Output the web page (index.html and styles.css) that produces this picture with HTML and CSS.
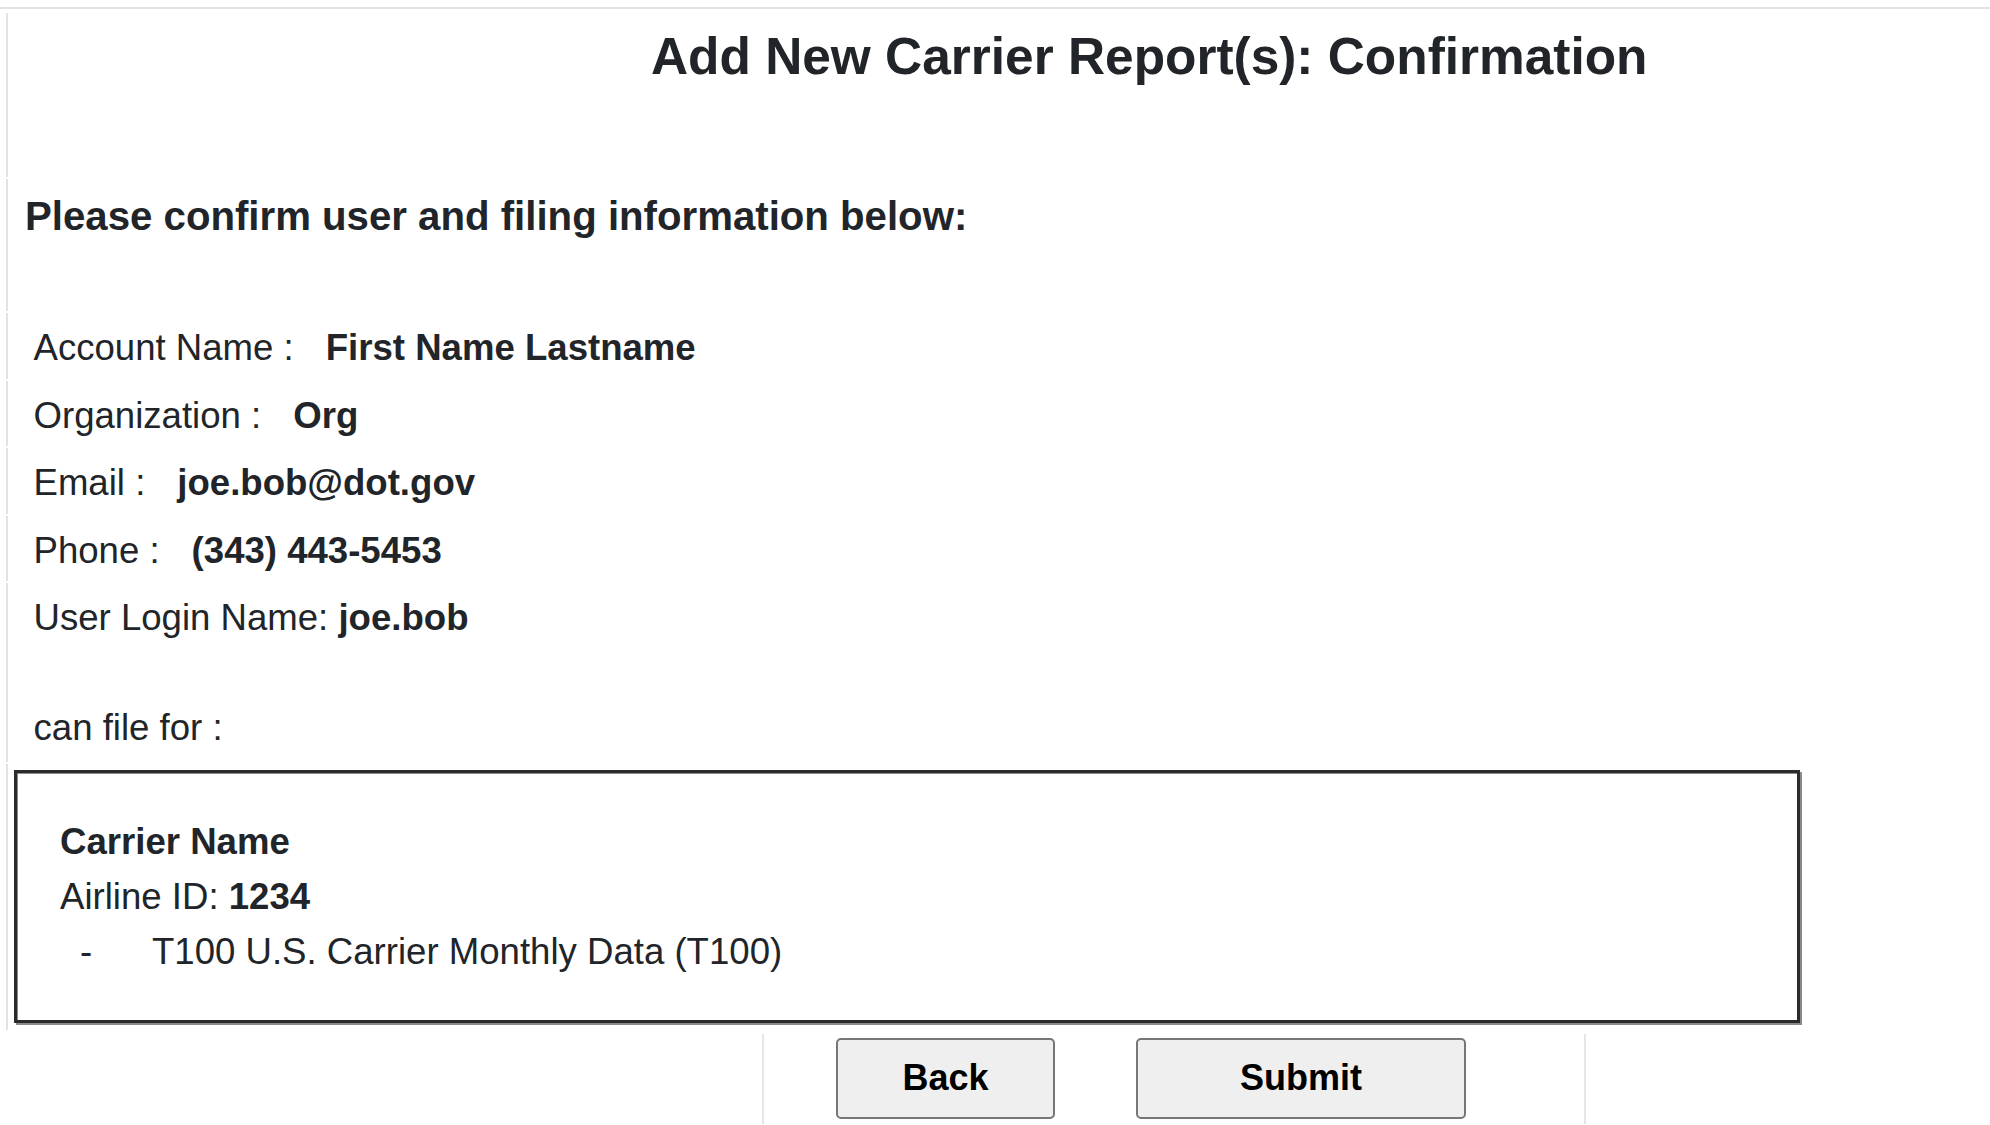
FILE: index.html
```html
<!DOCTYPE html>
<html lang="en">
<head>
    <meta charset="UTF-8">
    <meta name="viewport" content="width=device-width, initial-scale=1.0">
    <title>Add New Carrier Report(s): Confirmation</title>

    <link rel="stylesheet" href="styles.css">
</head>
<body>
    <div class="topo"></div>
    <div class="pagina">
        <div class="celula titulo">
            <h1>Add New Carrier Report(s): Confirmation</h1>
        </div>
        <div class="celula subtitulo">
            <h2>Please confirm user and filing information below:</h2>
        </div>
        <div class="celula linha">
            <span>Account Name :</span><b class="valor">First Name Lastname</b>
        </div>
        <div class="celula linha">
            <span>Organization :</span><b class="valor">Org</b>
        </div>
        <div class="celula linha">
            <span>Email :</span><b class="valor">joe.bob@dot.gov</b>
        </div>
        <div class="celula linha">
            <span>Phone :</span><b class="valor">(343) 443-5453</b>
        </div>
        <div class="celula linha login">
            <div>User Login Name: <b>joe.bob</b></div>
            <div class="pode">can file for :</div>
        </div>
        <div class="celula caixaCelula">
            <div class="caixa">
                <div><b>Carrier Name</b></div>
                <div>Airline ID: <b>1234</b></div>
                <div class="relatorio"><span class="traco">-</span>T100 U.S. Carrier Monthly Data (T100)</div>
            </div>
        </div>
        <div class="acoes">
            <div class="acoesCelula">
                <button class="botao voltar">Back</button>
                <button class="botao enviar">Submit</button>
            </div>
        </div>
    </div>
</body>
</html>
```

FILE: styles.css
```css
body{
    margin: 0;
    font-family: "Liberation Sans", Arial, sans-serif;
    color: #212529;
    background-color: white;
}
.topo{
    margin-top: 7px;
    border-top: 2px solid #e1e3e6;
}
.pagina{
    padding-top: 4px;
}
.celula{
    margin-left: 6px;
    margin-bottom: 2px;
    border-left: 2px solid #e2e3e5;
}
.titulo{
    height: 164px;
    box-sizing: border-box;
    padding: 12px 0 0 643px;
}
h1{
    margin: 0;
    font-size: 51.4px;
    line-height: 62px;
    font-weight: bold;
}
.subtitulo{
    height: 132px;
    box-sizing: border-box;
    padding: 14px 0 0 17px;
}
h2{
    margin: 0;
    font-size: 40.2px;
    line-height: 47px;
    font-weight: bold;
}
.linha{
    font-size: 36.6px;
    line-height: 51.5px;
    padding: 9px 0 5px 25.5px;
    display: flex;
}
.valor{
    margin-left: 32px;
}
.login{
    display: block;
    padding-bottom: 8px;
}
.pode{
    margin-top: 58.5px;
}
.caixaCelula{
    padding: 6px 0 7px 6px;
}
.caixa{
    width: 1786px;
    box-sizing: border-box;
    border: 3px solid #2b2b2b;
    box-shadow: 2px 2px 0 #8a8a8a, inset 1px 1px 0 #8a8a8a;
    padding: 41px 0 41px 43px;
    font-size: 36.6px;
    line-height: 55px;
}
.traco{
    display: inline-block;
    margin-left: 20px;
    width: 72px;
}
.acoes{
    margin-top: 4px;
    padding-left: 762px;
}
.acoesCelula{
    width: 824px;
    height: 90px;
    box-sizing: border-box;
    border-left: 2px solid #e6e6e6;
    border-right: 2px solid #e6e6e6;
    padding: 4px 0 0 72px;
    display: flex;
    gap: 81px;
}
.botao{
    height: 81px;
    background-color: #efefef;
    border: 2px solid #767676;
    border-radius: 5px;
    font-family: "Liberation Sans", Arial, sans-serif;
    font-size: 36px;
    font-weight: bold;
    color: black;
    cursor: pointer;
}
.voltar{
    width: 219px;
}
.enviar{
    width: 330px;
}
```
